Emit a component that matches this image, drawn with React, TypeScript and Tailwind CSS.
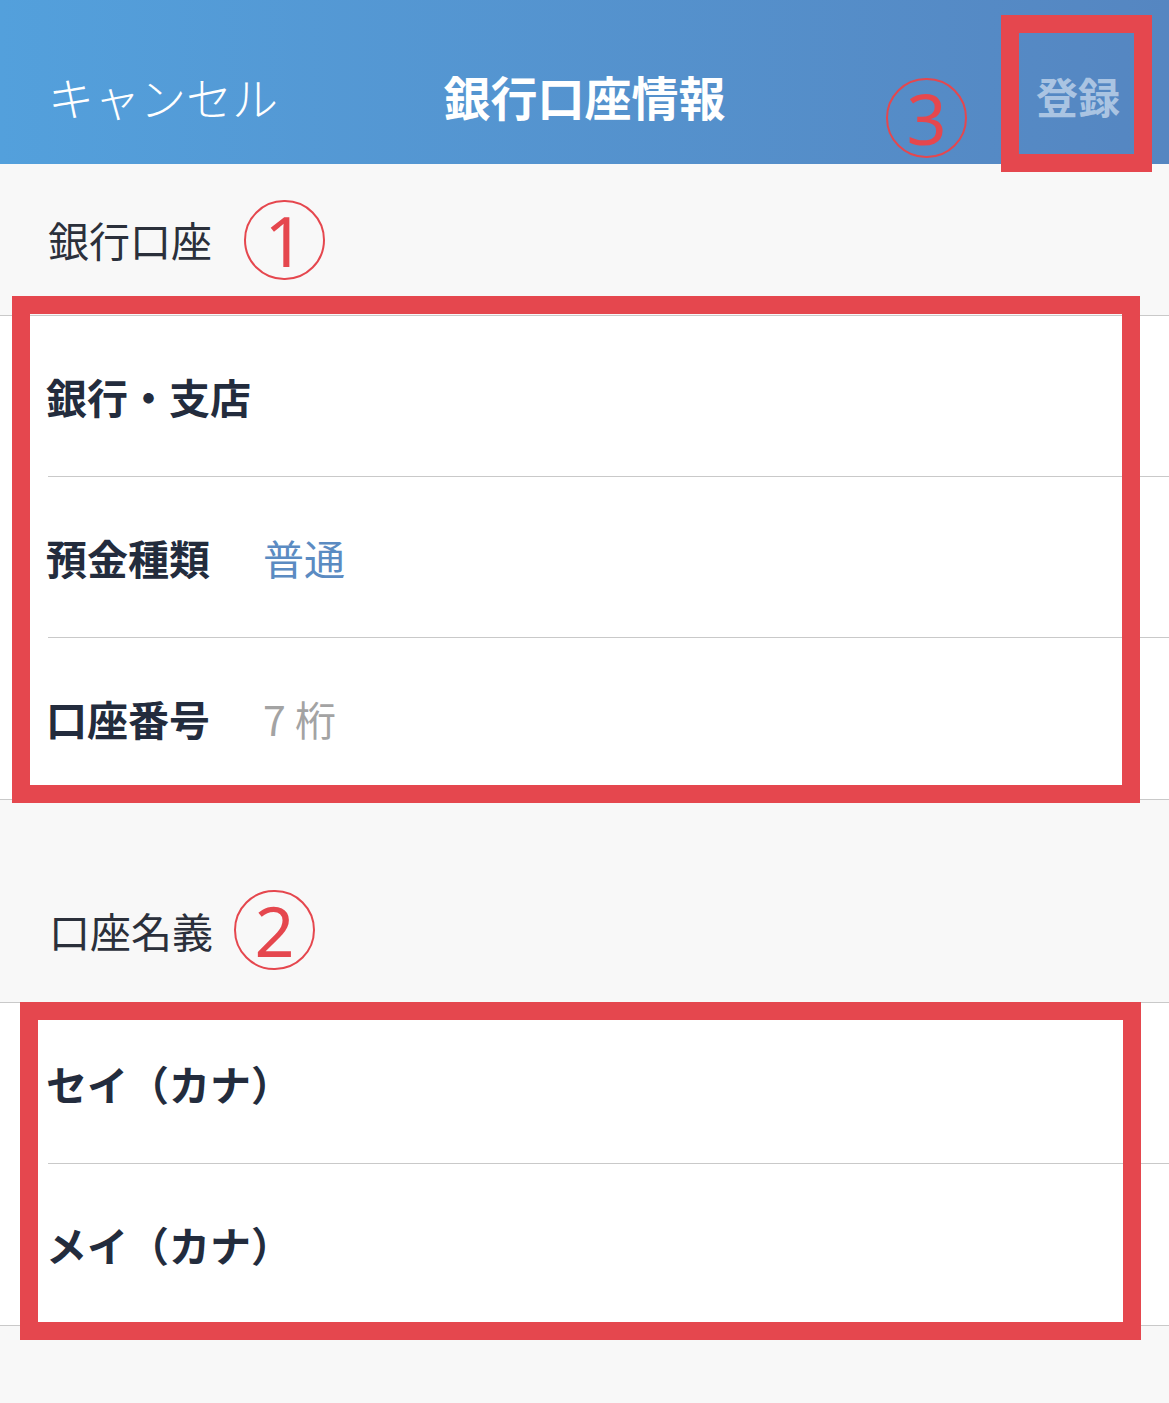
import React from "react";

const RED = "border-[#e5474e]";

function Circled({ n }: { n: string }) {
  return (
    <div className="w-[81px] h-[80px] rounded-full border-2 border-[#e5474e] flex items-center justify-center shrink-0">
      <span className="text-[#e5474e] text-[70px] font-normal leading-none" style={{ fontFamily: '"Noto Sans", "Open Sans", sans-serif' }}>
        {n}
      </span>
    </div>
  );
}

function Row({ label, value, valueClass, last }: { label: string; value?: string; valueClass?: string; last?: boolean }) {
  return (
    <div className="bg-white pl-[48px]">
      <div className={`h-[161px] flex items-center pt-[-2px] ${last ? "" : "border-b border-[#c9c9c9]"}`}>
        <span className="w-[215px] -ml-[2px] mr-[2px] shrink-0 text-[41px] font-bold text-[#232c3d] whitespace-nowrap leading-none">{label}</span>
        {value && <span className={`text-[41px] leading-none ${valueClass}`}>{value}</span>}
      </div>
    </div>
  );
}

export default function App() {
  return (
    <div
      className="relative w-[1169px] min-h-[1403px] bg-[#f8f8f8] overflow-hidden"
      style={{ fontFamily: '"Noto Sans CJK JP", "Noto Sans", sans-serif' }}
    >
      {/* Header */}
      <div className="h-[164px] bg-gradient-to-r from-[#53a0dc] to-[#5586c1] pt-[27px] grid grid-cols-[1fr_auto_1fr] items-center">
        <div className="pl-[48px] text-white text-[46px] font-light leading-none whitespace-nowrap">キャンセル</div>
        <div className="text-white text-[47px] font-bold leading-none whitespace-nowrap">銀行口座情報</div>
        <div className="flex justify-end pr-[49px] text-[#aac4e2] text-[42px] font-bold leading-none">登録</div>
      </div>

      {/* Section 1 */}
      <div className="h-[151px] flex items-center pl-[48px] gap-[32px]">
        <span className="text-[41px] text-[#2b303b] leading-none">銀行口座</span>
        <Circled n="1" />
      </div>
      <div className="border-y border-[#c9c9c9]">
        <Row label="銀行・支店" />
        <Row label="預金種類" value="普通" valueClass="text-[#5b8bc2]" />
        <Row label="口座番号" value="7 桁" valueClass="text-[#a3a3a3]" last />
      </div>

      {/* Section 2 */}
      <div className="h-[202px] flex items-center pl-[49px] gap-[21px] pt-[58px]">
        <span className="text-[41px] text-[#2b303b] leading-none">口座名義</span>
        <Circled n="2" />
      </div>
      <div className="border-y border-[#c9c9c9]">
        <Row label="セイ（カナ）" />
        <Row label="メイ（カナ）" last />
      </div>

      {/* Annotation overlays */}
      <div className={`absolute left-[1001px] top-[15px] w-[151px] h-[157px] border-[18px] ${RED}`} />
      <div className="absolute left-[886px] top-[78px]">
        <Circled n="3" />
      </div>
      <div className={`absolute left-[12px] top-[296px] w-[1128px] h-[507px] border-[18px] ${RED}`} />
      <div className={`absolute left-[20px] top-[1002px] w-[1121px] h-[338px] border-[18px] ${RED}`} />
    </div>
  );
}
